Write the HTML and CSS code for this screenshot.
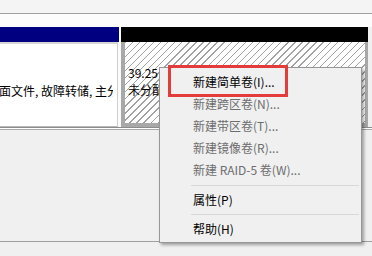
FILE: index.html
```html
<!DOCTYPE html>
<html lang="zh-CN">
<head>
<meta charset="utf-8">
<title>磁盘管理</title>
<link rel="stylesheet" href="styles.css">
</head>
<body>
<div class="screen">
  <div class="toolbar"></div>
  <div class="spacer"></div>
  <div class="disk">
    <div class="part primary">
      <div class="cap cap-blue"></div>
      <div class="body body-plain">
        <div class="line"></div>
        <div class="line clip">面文件, 故障转储, 主分区</div>
      </div>
    </div>
    <div class="part free">
      <div class="cap cap-black"></div>
      <div class="body body-hatch">
        <div class="line">39.25 GB</div>
        <div class="line">未分配</div>
      </div>
    </div>
  </div>
  <div class="rule"></div>
  <div class="lower"></div>
</div>

<ul class="menu">
  <li class="item">新建简单卷(I)...</li>
  <li class="item disabled">新建跨区卷(N)...</li>
  <li class="item disabled">新建带区卷(T)...</li>
  <li class="item disabled">新建镜像卷(R)...</li>
  <li class="item disabled">新建 RAID-5 卷(W)...</li>
  <li class="sep sep-a"></li>
  <li class="item">属性(P)</li>
  <li class="sep sep-b"></li>
  <li class="item">帮助(H)</li>
</ul>
<div class="highlight"></div>
</body>
</html>
```

FILE: styles.css
```css
* { box-sizing: border-box; }

html, body {
  margin: 0;
  padding: 0;
}

body {
  width: 372px;
  height: 256px;
  overflow: hidden;
  background: #f0f0f0;
  font-family: "Noto Sans CJK SC", "Noto Sans", sans-serif;
  font-size: 12px;
  color: #000;
  position: relative;
}

.screen {
  display: flex;
  flex-direction: column;
}

.toolbar {
  height: 14px;
  background: #f4f4f4;
  border-bottom: 1px solid #a0a0a0;
}

.spacer {
  height: 13px;
  background: #fcfcfc;
}

.disk {
  display: flex;
  gap: 2px;
  width: 368px;
  background: #fcfcfc;
}

.part {
  display: flex;
  flex-direction: column;
}

.primary { width: 119px; }
.free { width: 247px; }

.cap { height: 15px; }
.cap-blue { background: #000080; }
.cap-black { background: #000; }

.body {
  height: 85px;
  padding-top: 21px;
}

.body-plain {
  background: #fff;
  border-top: 2px solid #d6d6d6;
  border-bottom: 1px solid #b8b8b8;
  border-right: 1px solid #cfcfcf;
  margin-right: 1px;
}

.body-hatch {
  border-left: 4px solid #a8a8a8;
  border-right: 3px solid #a8a8a8;
  border-bottom: 4px solid #a8a8a8;
  padding-left: 3px;
  padding-top: 22px;
  background: repeating-linear-gradient(135deg, #a2a2a2 0 1px, #ffffff 1px 5px);
}

.line {
  height: 17px;
  line-height: 17px;
  white-space: nowrap;
  overflow: hidden;
}

.clip {
  margin-left: -1px;
  width: 114px;
}

.rule {
  height: 3px;
  border-top: 1px solid #8c8c8c;
  border-bottom: 1px solid #a8a8a8;
  background: #fff;
}

.lower {
  height: 112px;
  background: #f0f0f0;
  border-bottom: 1px solid #a0a0a0;
}

.menu {
  position: absolute;
  left: 159px;
  top: 67px;
  width: 203px;
  height: 176px;
  margin: 0;
  padding: 3px 1px 2px 0;
  list-style: none;
  background: #f0f0f0;
  border: 1px solid #979797;
  box-shadow: 2px 2px 3px rgba(0, 0, 0, 0.35);
}

.item {
  height: 22px;
  line-height: 22px;
  padding-left: 33px;
  white-space: nowrap;
  color: #000;
}

.item.disabled { color: #6d6d6d; }

.sep {
  height: 1px;
  background: #d7d7d7;
  margin-left: 31px;
  margin-right: 1px;
}

.sep-a { margin-top: 4px; margin-bottom: 3px; }
.sep-b { margin-top: 3px; margin-bottom: 3px; }

.highlight {
  position: absolute;
  left: 168px;
  top: 65px;
  width: 120px;
  height: 32px;
  border: 3px solid #e43b3b;
}
```
